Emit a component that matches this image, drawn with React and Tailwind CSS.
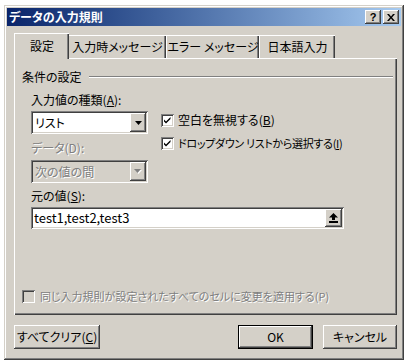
import React from "react";

const RAISED =
  "shadow-[inset_-1px_-1px_0_#404040,inset_1px_1px_0_#ffffff,inset_-2px_-2px_0_#808080,inset_2px_2px_0_#d4d0c8]";
const SUNKEN =
  "shadow-[inset_1px_1px_0_#808080,inset_-1px_-1px_0_#ffffff,inset_2px_2px_0_#404040,inset_-2px_-2px_0_#d4d0c8]";

function Check({ checked, disabled }) {
  return (
    <div
      className={`w-[13px] h-[13px] shrink-0 flex items-center justify-center ${SUNKEN} ${
        disabled ? "bg-[#d4d0c8]" : "bg-white"
      }`}
    >
      {checked && (
        <svg width="13" height="13" viewBox="0 0 13 13">
          <path d="M3 5.5 L5 7.5 L9.5 3 L9.5 5 L5 9.5 L3 7.5 Z" fill="#000" />
        </svg>
      )}
    </div>
  );
}

function DownArrow({ color = "#000" }) {
  return (
    <svg width="7" height="4" viewBox="0 0 7 4">
      <path d="M0 0 H7 L3.5 4 Z" fill={color} />
    </svg>
  );
}

function Select({ value, disabled }) {
  return (
    <div
      className={`w-[117px] h-[23px] flex items-center p-[2px] ${SUNKEN} ${
        disabled ? "bg-[#d4d0c8]" : "bg-white"
      }`}
    >
      <div
        className={`flex-1 pl-[2px] text-[12px] leading-[14px] whitespace-nowrap ${
          disabled ? "text-[#808080] [text-shadow:1px_1px_0_#fff]" : "text-black"
        }`}
      >
        {value}
      </div>
      <div className={`w-[16px] h-[19px] bg-[#d4d0c8] flex items-center justify-center ${RAISED}`}>
        {disabled ? (
          <svg width="8" height="5" viewBox="0 0 8 5">
            <path d="M1 1 H8 L4.5 5 Z" fill="#fff" />
            <path d="M0 0 H7 L3.5 4 Z" fill="#808080" />
          </svg>
        ) : (
          <DownArrow />
        )}
      </div>
    </div>
  );
}

function Button({ children, def, w }) {
  return (
    <div
      className={`${w} h-[24px] flex items-center justify-center whitespace-nowrap bg-[#d4d0c8] text-[12px] leading-[14px] text-black ${
        def
          ? "shadow-[inset_0_0_0_1px_#000,inset_-2px_-2px_0_#404040,inset_2px_2px_0_#ffffff,inset_-3px_-3px_0_#808080]"
          : RAISED
      }`}
    >
      {children}
    </div>
  );
}

const TAB =
  "h-[23px] bg-[#d4d0c8] border-t border-l border-white shadow-[inset_-1px_0_0_#404040,inset_-2px_0_0_#808080] flex items-center justify-center text-[12px] leading-[14px] text-black whitespace-nowrap";

export default function App() {
  return (
    <div className="w-[410px] h-[362px] bg-white overflow-hidden pt-[5px] pl-[4px] font-['Noto_Sans_CJK_JP',sans-serif] [font-feature-settings:'palt']">
      <div className="w-[400px] h-[355px] bg-[#d4d0c8] p-[3px] shadow-[inset_-1px_-1px_0_#404040,inset_1px_1px_0_#d4d0c8,inset_-2px_-2px_0_#808080,inset_2px_2px_0_#ffffff]">
        {/* Title bar */}
        <div className="h-[18px] bg-linear-to-r from-[#0a246a] to-[#a6caf0] flex items-center pl-[2px] pr-[2px]">
          <div className="flex-1 text-white font-bold text-[12px] leading-[14px] whitespace-nowrap">データの入力規則</div>
          <div className={`w-[16px] h-[14px] bg-[#d4d0c8] ${RAISED} flex items-center justify-center text-[11px] font-bold leading-none text-black font-['Liberation_Sans',sans-serif]`}>
            ?
          </div>
          <div className={`ml-[2px] w-[16px] h-[14px] bg-[#d4d0c8] ${RAISED} flex items-center justify-center`}>
            <svg width="8" height="7" viewBox="0 0 8 7">
              <path d="M0 0 H2 L4 2.5 L6 0 H8 L5 3.5 L8 7 H6 L4 4.5 L2 7 H0 L3 3.5 Z" fill="#000" />
            </svg>
          </div>
        </div>

        {/* Body */}
        <div className="ml-[7px] w-[383px] mt-[7px]">
          {/* Tabs */}
          <div className="flex items-end h-[25px] relative z-10">
            <div className="w-[55px] h-[26px] -mb-[1px] bg-[#d4d0c8] border-t border-l border-white shadow-[inset_-1px_0_0_#404040,inset_-2px_0_0_#808080] flex items-center justify-center text-[12px] leading-[14px] text-black pb-[1px]">
              設定
            </div>
            <div className={`w-[97px] ${TAB} border-l-0`}>入力時メッセージ</div>
            <div className={`w-[93px] ${TAB}`}>エラー メッセージ</div>
            <div className={`w-[76px] ${TAB}`}>日本語入力</div>
          </div>

          {/* Panel */}
          <div className="h-[257px] border-t border-l border-white shadow-[inset_-1px_-1px_0_#404040,inset_-2px_-2px_0_#808080] text-[12px] leading-[14px] text-black whitespace-nowrap">
            <div className="flex items-center pl-[7px] pr-[4px] pt-[11px]">
              <span>条件の設定</span>
              <div className="flex-1 ml-[7px] h-[2px] border-t border-[#808080] border-b border-b-white" />
            </div>

            <div className="pl-[16px] mt-[9px]">
              <div>入力値の種類(<span className="underline">A</span>):</div>
              <div className="flex mt-[4px]">
                <div className="flex flex-col">
                  <Select value="リスト" />
                  <div className="mt-[7px] text-[#808080] [text-shadow:1px_1px_0_#fff]">データ(D):</div>
                  <div className="mt-[5px]">
                    <Select value="次の値の間" disabled />
                  </div>
                </div>
                <div className="ml-[13px] flex flex-col pt-[2px]">
                  <div className="flex items-center">
                    <Check checked />
                    <span className="ml-[4px]">空白を無視する(<span className="underline">B</span>)</span>
                  </div>
                  <div className="flex items-center mt-[9px]">
                    <Check checked />
                    <span className="ml-[4px] text-[11px] tracking-[-0.3px]">ドロップダウン リストから選択する(<span className="underline">I</span>)</span>
                  </div>
                </div>
              </div>

              <div className="mt-[6px]">元の値(<span className="underline">S</span>):</div>
              <div className={`mt-[4px] w-[313px] h-[22px] bg-white flex items-center p-[2px] ${SUNKEN}`}>
                <div className="flex-1 pl-[1px] text-[13px] leading-[16px] [font-feature-settings:normal]">test1,test2,test3</div>
                <div className={`w-[17px] h-[18px] bg-[#d4d0c8] flex items-center justify-center ${RAISED}`}>
                  <svg width="9" height="10" viewBox="0 0 9 10">
                    <path d="M4.5 0 L9 4.5 H6 V7 H3 V4.5 H0 Z" fill="#000" />
                    <rect x="0" y="8" width="9" height="2" fill="#000" />
                  </svg>
                </div>
              </div>
            </div>

            <div className="flex items-center pl-[7px] mt-[60px]">
              <Check disabled />
              <span className="ml-[5px] text-[11px] text-[#808080] [text-shadow:1px_1px_0_#fff]">
                同じ入力規則が設定されたすべてのセルに変更を適用する(P)
              </span>
            </div>
          </div>

          {/* Buttons */}
          <div className="flex mt-[10px]">
            <Button w="w-[86px]">
              すべてクリア(<span className="underline">C</span>)
            </Button>
            <div className="flex-1" />
            <Button w="w-[75px]" def>
              OK
            </Button>
            <div className="w-[10px]" />
            <Button w="w-[74px]">キャンセル</Button>
          </div>
        </div>
      </div>
    </div>
  );
}
